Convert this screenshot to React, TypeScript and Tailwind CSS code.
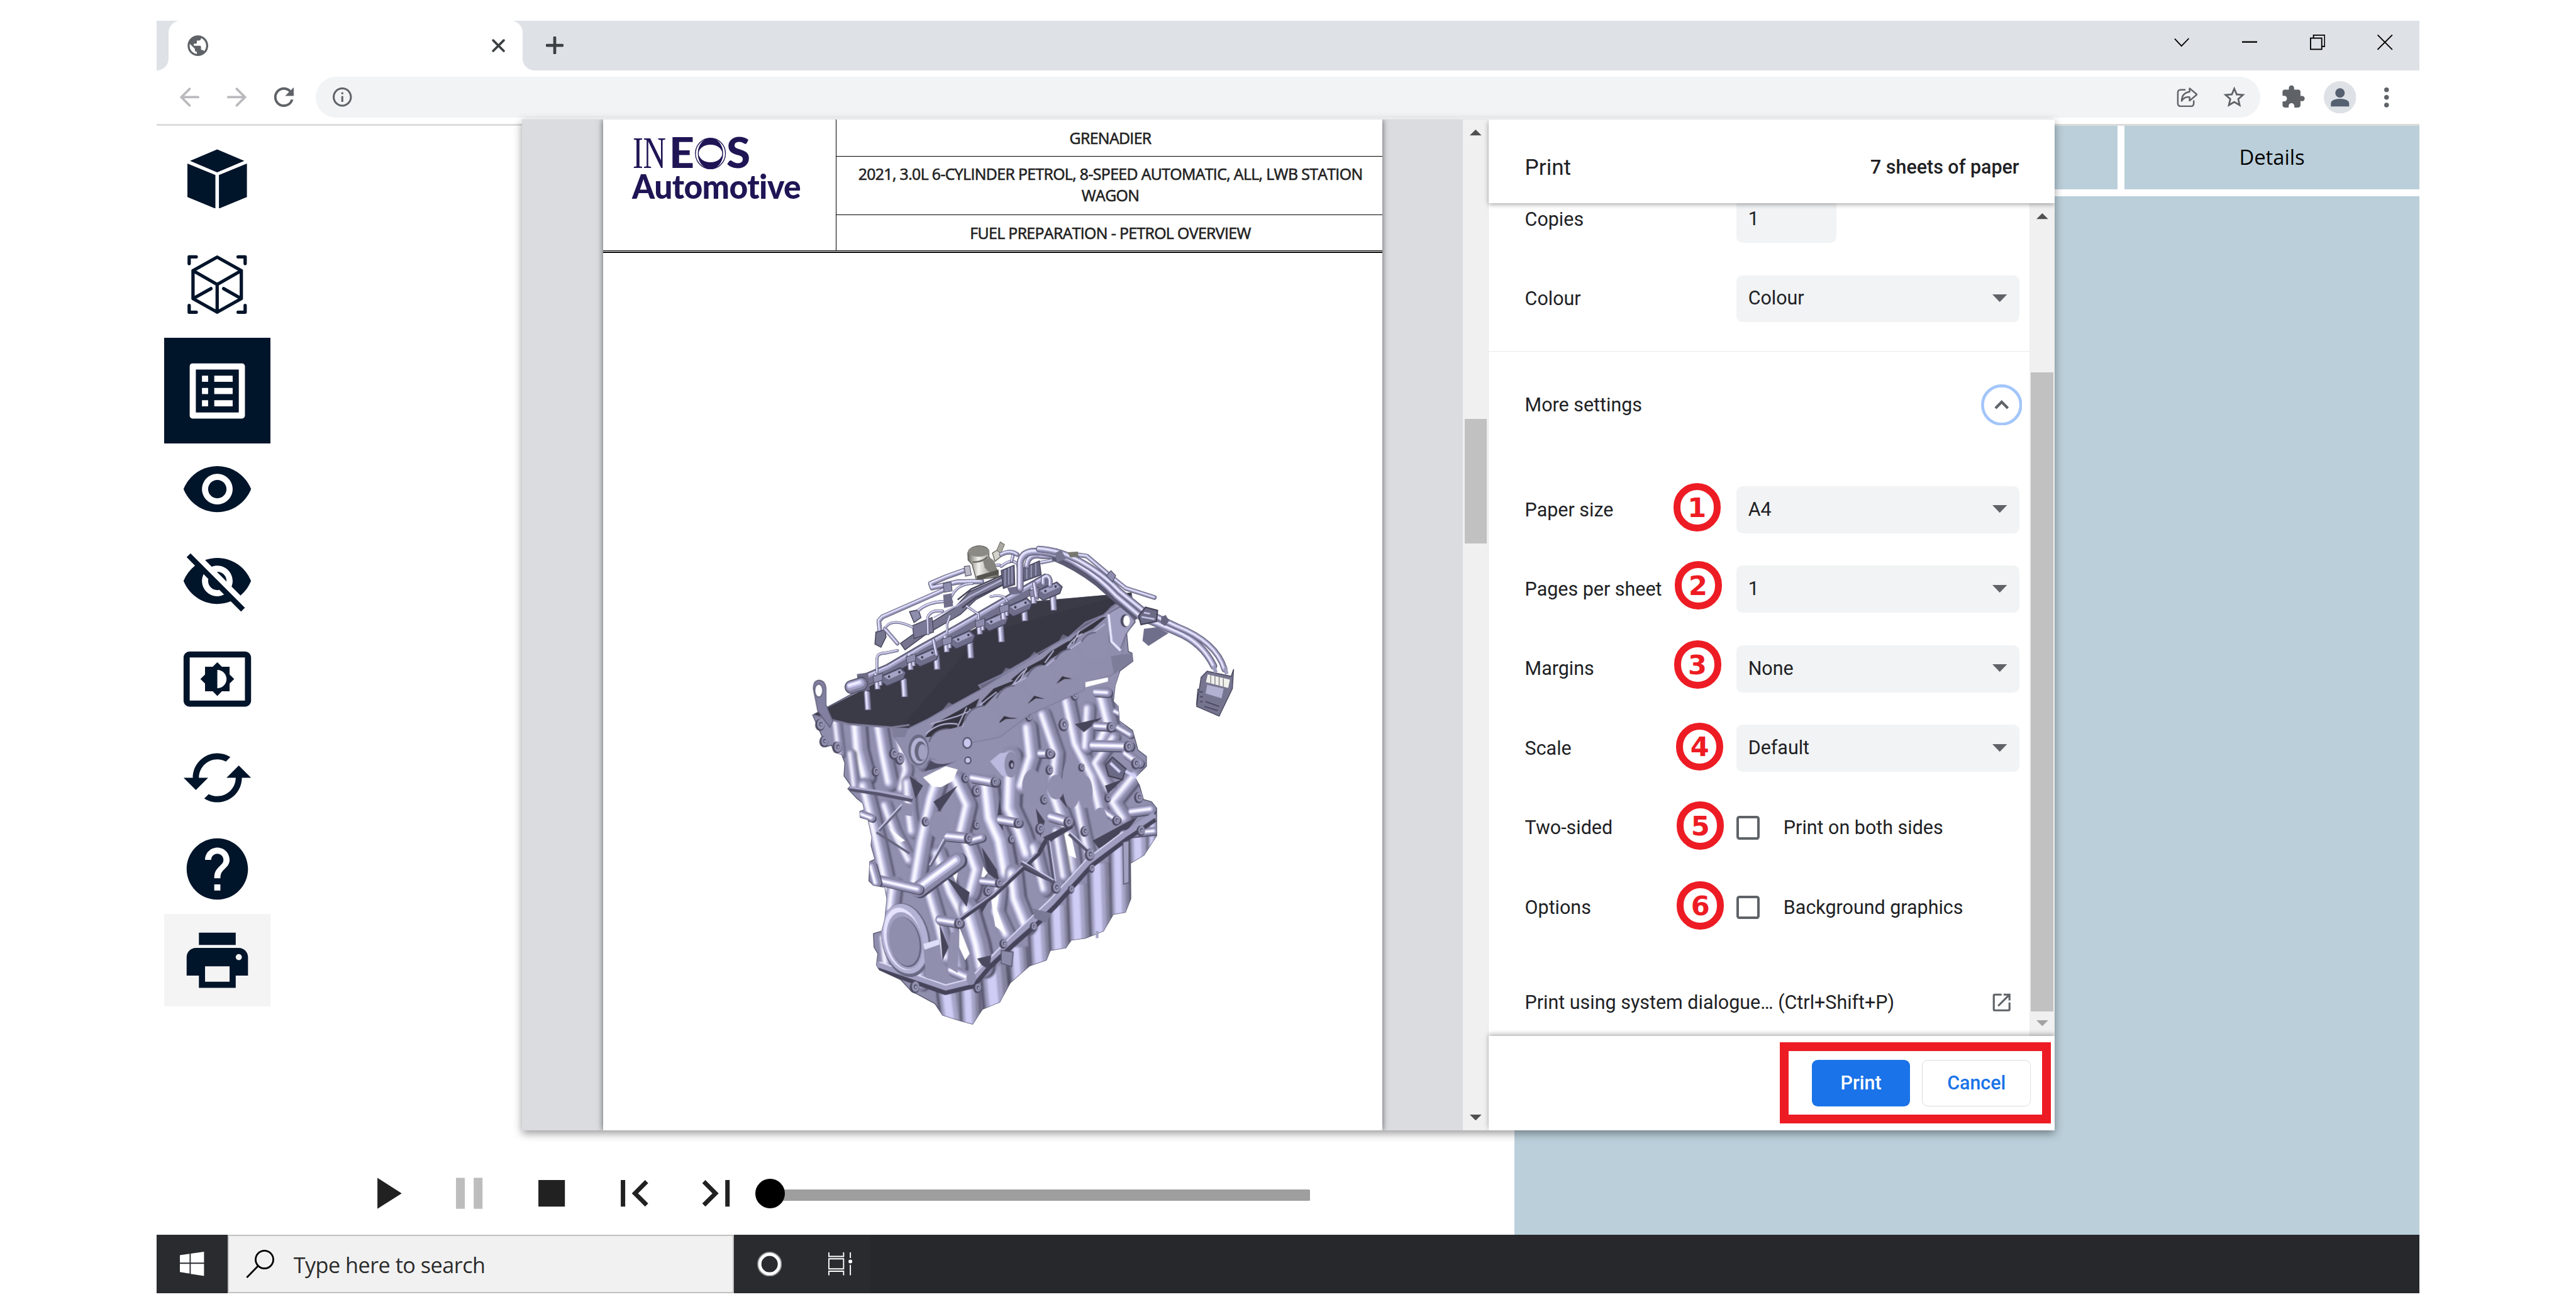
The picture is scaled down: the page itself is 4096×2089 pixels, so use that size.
import type { ReactNode } from "react";
import {
  MdCached,
  MdFirstPage,
  MdHelp,
  MdLastPage,
  MdOutlineListAlt,
  MdPause,
  MdPlayArrow,
  MdPrint,
  MdSettingsBrightness,
  MdStop,
  MdVisibility,
  MdVisibilityOff,
  MdExtension,
  MdOpenInNew,
  MdPublic,
  MdRefresh,
  MdStarOutline,
  MdInfoOutline,
} from "react-icons/md";

/* ---------- browser chrome ---------- */

function TabStrip() {
  return (
    <div className="flex h-[85px] bg-white">
      <div className="w-5 rounded-br-[20px] bg-[#dee1e6]" />
      <div className="w-[601px] bg-[linear-gradient(#dee1e6_50%,#fff_50%)]">
        <div className="flex h-full items-center justify-between rounded-t-[20px] bg-white pr-[26px] pl-[29px]">
          <MdPublic className="size-[42px] text-[#5f6368]" />
          <svg className="size-[29px]" viewBox="0 0 29 29">
            <path d="M5.500 5.500L23.500 23.500M23.500 5.500L5.500 23.500" stroke="#3c4043" strokeWidth="4" strokeLinecap="round" />
          </svg>
        </div>
      </div>
      <div className="flex flex-1 justify-between rounded-bl-[20px] bg-[#dee1e6] pr-[45px] pl-[39px]">
        <svg className="mt-[27px] size-[30px]" viewBox="0 0 30 30">
          <path d="M15 2V28M2 15H28" stroke="#3c4043" strokeWidth="5" strokeLinecap="round" />
        </svg>
        <div className="mt-[24px] flex gap-[89px]">
          <svg className="size-[26px]" viewBox="0 0 26 26" fill="none" stroke="#000" strokeWidth="2">
            <path d="M1 7L12.500 19.500L25 6.500" />
          </svg>
          <svg className="size-[26px]" viewBox="0 0 26 26">
            <path d="M0 12.500H26" stroke="#000" strokeWidth="2.500" />
          </svg>
          <svg className="size-[26px]" viewBox="0 0 26 26" fill="none" stroke="#000" strokeWidth="2">
            <rect x="1" y="6" width="19" height="19" />
            <path d="M6 6V1H25V20H20" />
          </svg>
          <svg className="size-[26px]" viewBox="0 0 26 26">
            <path d="M0.500 0.500L25.500 25.500M25.500 0.500L0.500 25.500" stroke="#000" strokeWidth="2" />
          </svg>
        </div>
      </div>
    </div>
  );
}

function Toolbar() {
  return (
    <div className="flex h-[90px] items-center bg-white">
      <svg className="ml-[39px] h-[33px] w-[33px]" viewBox="0 0 33 33" fill="none" stroke="#bababe" strokeWidth="4" strokeLinecap="round">
        <path d="M31 16.500H2.500M16.500 2.500L2.500 16.500L16.500 30.500" />
      </svg>
      <svg className="ml-[47px] h-[33px] w-[33px]" viewBox="0 0 33 33" fill="none" stroke="#bababe" strokeWidth="4" strokeLinecap="round">
        <path d="M2 16.500H30.500M16.500 2.500L30.500 16.500L16.500 30.500" />
      </svg>
      <MdRefresh className="ml-[39px] size-[50px] text-[#5f6368]" />
      <div className="ml-[29px] flex h-[70px] w-[3300px] items-center justify-between rounded-full bg-[#f1f3f4] pr-[22px] pl-[25px]">
        <MdInfoOutline className="size-[39px] text-[#5f6368]" />
        <div className="flex items-center gap-[40px]">
          <svg className="h-[34px] w-[36px]" viewBox="0 0 36 34" fill="none" stroke="#5f6368" strokeWidth="2.600" strokeLinejoin="round">
            <path d="M14 4H7Q2 4 2 9V27Q2 32 7 32H24Q29 32 29 27V23" strokeLinecap="round" />
            <path d="M22 1.500L34.500 12L22 22.500V16.500Q13 15 8.500 23Q9 9 22 7.500Z" />
          </svg>
          <MdStarOutline className="size-[44px] text-[#5f6368]" />
        </div>
      </div>
      <MdExtension className="ml-[34px] size-[43px] text-[#5f6368]" />
      <svg className="ml-[31px] size-[55px]" viewBox="0 0 55 55">
        <circle cx="27.500" cy="27.500" r="27.500" fill="#dee1e6" />
        <circle cx="27.500" cy="20" r="8" fill="#556070" />
        <path d="M12 43V37Q14 30 27.500 30Q41 30 43 37V43Z" fill="#556070" />
      </svg>
      <svg className="ml-[48px] h-[36px] w-2" viewBox="0 0 8 36" fill="#5f6368">
        <circle cx="4" cy="5" r="4" />
        <circle cx="4" cy="18" r="4" />
        <circle cx="4" cy="31" r="4" />
      </svg>
    </div>
  );
}

/* ---------- viewer side bar ---------- */

function CubeIcon() {
  return (
    <svg className="h-[101px] w-[101px]" viewBox="0 0 101 101" fill="#00142a">
      <path d="M50.500 0.500L96.500 20L50.500 39.500L4.500 20Z" />
      <path d="M0 24.500L47.500 44V101L0 81.500Z" />
      <path d="M101 24.500L53.500 44V101L101 81.500Z" />
    </svg>
  );
}

function CubeScanIcon() {
  return (
    <svg className="h-[101px] w-[101px]" viewBox="0 0 101 101" fill="none" stroke="#00142a" strokeWidth="5.600" strokeLinejoin="round" strokeLinecap="round">
      <path d="M50.500 4L91.500 27V74.500L50.500 97.500L9.500 74.500V27ZM9.500 27L50.500 50.500L91.500 27M50.500 50.500V97.500M9.500 74.500L40 57.500M91.500 74.500L61.500 57.500" />
      <path d="M15 3.500H3V15M86 3.500H98V15M3 86V97.500H15M98 86V97.500H86" />
    </svg>
  );
}

function SideItem({ className, children }: { className: string; children: ReactNode }) {
  return <div className={"flex w-[180px] items-center justify-center " + className}>{children}</div>;
}

function SideBar() {
  return (
    <div className="ml-[13px] flex w-[180px] flex-col text-[#00142a]">
      <SideItem className="h-[180px]"><CubeIcon /></SideItem>
      <SideItem className="h-[180px]"><CubeScanIcon /></SideItem>
      <SideItem className="h-[180px] bg-[#00142a] text-white"><MdOutlineListAlt className="size-[125px]" /></SideItem>
      <SideItem className="h-[155px]"><MdVisibility className="size-[125px]" /></SideItem>
      <SideItem className="h-[156px]"><MdVisibilityOff className="size-[125px]" /></SideItem>
      <SideItem className="h-[177px]"><MdSettingsBrightness className="size-[125px]" /></SideItem>
      <SideItem className="h-[157px]"><MdCached className="size-[125px]" /></SideItem>
      <SideItem className="h-[153px]"><MdHelp className="size-[125px]" /></SideItem>
      <SideItem className="h-[157px] bg-[#f4f4f4]"><MdPrint className="size-[125px]" /></SideItem>
    </div>
  );
}

/* ---------- engine illustration ---------- */

type TubeSpec = [string, number];

function Tube({ d, w, cap = "round" }: { d: string; w: number; cap?: "round" | "butt" }) {
  return (
    <g fill="none" strokeLinecap={cap} strokeLinejoin="round">
      <path d={d} stroke="#4b4a61" strokeWidth={w} />
      <path d={d} stroke="#7f7e9c" strokeWidth={w * 0.88} />
      <path d={d} stroke="#a3a2c4" strokeWidth={w * 0.62} transform={`translate(${-w * 0.06} ${-w * 0.06})`} />
      <path d={d} stroke="#cdcbf3" strokeWidth={w * 0.36} transform={`translate(${-w * 0.12} ${-w * 0.1})`} />
      <path d={d} stroke="#f4f3ff" strokeWidth={w * 0.13} transform={`translate(${-w * 0.16} ${-w * 0.12})`} />
    </g>
  );
}

/* A rib that belongs to the casting: shaded on its right flank, lit on its left. */
function Rib({ d, w, cap = "round" }: { d: string; w: number; cap?: "round" | "butt" }) {
  return (
    <g fill="none" strokeLinecap={cap} strokeLinejoin="round">
      <path d={d} stroke="#4f4e66" strokeWidth={w * 0.94} transform={`translate(${w * 0.12} 3)`} />
      <path d={d} stroke="#8a89a8" strokeWidth={w * 0.92} />
      <path d={d} stroke="#b1b0d3" strokeWidth={w * 0.55} transform={`translate(${-w * 0.1} 0)`} />
      <path d={d} stroke="#e2e0fd" strokeWidth={w * 0.3} transform={`translate(${-w * 0.14} 0)`} />
      <path d={d} stroke="#ffffff" strokeWidth={w * 0.12} transform={`translate(${-w * 0.16} 0)`} />
    </g>
  );
}

function PanLobe({ d, w }: { d: string; w: number }) {
  return (
    <g fill="none">
      <path d={d} stroke="#45445a" strokeWidth={w} />
      <path d={d} stroke="#85849f" strokeWidth={w * 0.86} />
      <path d={d} stroke="#a6a5c8" strokeWidth={w * 0.6} transform={`translate(${-w * 0.06} 0)`} />
      <path d={d} stroke="#cfcdf5" strokeWidth={w * 0.32} transform={`translate(${-w * 0.1} 0)`} />
    </g>
  );
}

function Boss({ x, y, r }: { x: number; y: number; r: number }) {
  return (
    <g>
      <ellipse cx={x - 3} cy={y + 2} rx={r + 2} ry={r * 1.2 + 2} fill="#4b4a61" />
      <ellipse cx={x} cy={y} rx={r * 0.9} ry={r * 1.15} fill="#9291b0" />
      <ellipse cx={x} cy={y} rx={r * 0.38} ry={r * 0.5} fill="#4b4a61" />
      <ellipse cx={x + 1} cy={y + 1} rx={r * 0.2} ry={r * 0.3} fill="#b9b8d8" />
    </g>
  );
}

const BLOCK =
  "M78 572L110 640L105 655L120 670L140 665L150 685L175 695L185 720L182 760L205 790L195 800L225 830L245 845L250 865L235 870L236 888L262 895L275 950L272 975L285 1018L268 1025L265 1085L280 1098L318 1105L325 1140L318 1205L308 1240L280 1248L282 1290L295 1310L290 1345L300 1360L370 1390L405 1425L485 1465L510 1500L560 1515L610 1528L642 1482L700 1460L735 1400L800 1347L855 1330L868 1300L920 1292L938 1268L985 1262L1045 1240L1078 1188L1118 1182L1136 1140L1135 1030L1180 1005L1222 945L1222 860L1205 840L1178 833L1165 790L1150 765L1188 730L1188 700L1160 680L1142 620L1098 590L1094 545L1078 530L1084 480L1100 435L1143 405L1140 380L1128 375L1122 315L1150 285L1138 195L800 222L380 420Z";

const WALL_RIBS: TubeSpec[] = [
  ["M225 600L232 680L255 760", 62],
  ["M300 605L315 690L335 780", 54],
  ["M155 590L168 690", 34],
  ["M205 690L218 790", 34],
  ["M370 650L390 740L375 800", 44],
  ["M250 790L275 880L300 980L330 1110", 54],
  ["M320 850L350 930L400 1020", 44],
  ["M395 780L400 860L410 930", 48],
  ["M450 620L440 720", 46],
  ["M500 760L475 830L445 960L420 1100", 60],
  ["M555 770L595 850L575 930", 56],
  ["M590 960L625 1050L605 1120", 58],
  ["M660 790L672 890L705 960L725 1060", 72],
  ["M740 700L735 860L770 930L795 1000", 68],
  ["M795 610L806 700L775 790", 58],
  ["M845 570L890 690L880 790", 50],
  ["M925 530L955 660L1010 760L1035 860", 52],
  ["M880 810L930 940L945 1050", 58],
  ["M960 840L980 930L1000 1010", 44],
  ["M745 1060L755 1140L790 1220", 62],
  ["M700 1110L690 1180L725 1250", 52],
  ["M815 980L850 1110", 48],
  ["M890 930L915 1070", 42],
  ["M495 1000L540 1120L585 1200", 56],
  ["M595 1170L630 1280L645 1350", 72],
  ["M535 1230L560 1350", 60],
  ["M465 1110L500 1220L525 1320", 52],
  ["M1040 510L1065 600L1030 670", 58],
  ["M995 550L988 670", 46],
  ["M1080 640L1020 720L1065 800", 42],
  ["M1150 760L1080 840L1115 890", 50],
  ["M350 1095L340 1170", 52],
  ["M315 1260L325 1340", 44],
  ["M430 1330L440 1400", 50],
];

const CROSS_TUBES: TubeSpec[] = [
  ["M1010 665L1130 668", 36],
  ["M1020 605L1075 608", 28],
  ["M1095 610L1135 632", 24],
  ["M1020 500L1060 502", 30],
  ["M610 765L685 778", 34],
  ["M525 945L600 952", 34],
  ["M870 885L930 902", 34],
  ["M700 895L762 905", 30],
  ["M430 1110L560 1020", 54],
  ["M290 1080L430 1110", 34],
  ["M600 960L640 950", 28],
  ["M640 1085L690 1090", 26],
  ["M500 1205L565 1215", 32],
  ["M540 1360L600 1385", 38],
  ["M240 878L275 890", 26],
  ["M275 1040L290 1090", 34],
  ["M1050 870L1090 895", 26],
  ["M1140 870L1205 862", 34],
  ["M1110 940L1215 930", 26],
  ["M835 690L868 690", 30],
  ["M1120 690L1165 720", 32],
  ["M1130 580L1085 560", 24],
];

const BOSSES: [number, number, number][] = [
  [915, 600, 15], [1072, 608, 12], [1130, 668, 13], [685, 778, 11], [598, 952, 12],
  [930, 902, 13], [762, 905, 11], [836, 922, 13], [625, 910, 11], [1002, 1002, 14], [890, 1104, 14],
  [700, 1090, 11], [662, 1115, 12], [565, 1215, 12], [742, 955, 10], [456, 900, 11], [868, 690, 12],
  [625, 805, 14], [588, 765, 11], [868, 740, 11], [1155, 720, 13], [1165, 825, 13], [850, 832, 11],
  [370, 705, 14], [350, 690, 13], [118, 652, 13], [162, 670, 14], [105, 600, 14], [290, 745, 11],
  [1172, 928, 12], [1090, 897, 11], [985, 930, 12], [800, 575, 11], [952, 510, 11],
  [715, 1278, 11], [628, 1415, 11], [420, 1412, 14], [815, 1225, 10], [1008, 1045, 9], [940, 1110, 9],
  [1062, 828, 9], [975, 732, 9],
];

const PAN_LOBES: TubeSpec[] = [
  ["M530 1420L545 1530", 84],
  ["M600 1420L605 1540", 70],
  ["M680 1350L692 1480", 96],
  ["M760 1290L768 1410", 66],
  ["M830 1220L838 1350", 74],
  ["M895 1160L902 1310", 72],
  ["M960 1095L968 1275", 78],
  ["M1030 1030L1038 1255", 78],
  ["M1098 970L1103 1200", 70],
  ["M1165 930L1168 1030", 76],
  ["M1210 900L1208 990", 34],
];

const STUDS: [number, number][] = [[258, 500], [380, 460], [488, 375], [600, 340], [702, 290], [780, 225], [876, 192]];

const INJECTORS: [number, number][] = [[330, 450], [440, 390], [560, 335], [670, 280], [750, 235], [850, 185]];

function Engine() {
  return (
    <svg className="h-[860px] w-[800px]" viewBox="0 0 1568 1568" preserveAspectRatio="none">
      <defs>
        <clipPath id="block"><path d={BLOCK} /></clipPath>
        <filter id="soft" x="-5%" y="-5%" width="110%" height="110%"><feGaussianBlur stdDeviation="3" /></filter>
        <linearGradient id="metal" x1="0" x2="1">
          <stop offset="0" stopColor="#6d6c66" />
          <stop offset="0.350" stopColor="#f3f2ec" />
          <stop offset="1" stopColor="#6b6a64" />
        </linearGradient>
      </defs>

      <path d={BLOCK} fill="#8f8ead" stroke="#5d5c75" strokeWidth="3" />
      <g clipPath="url(#block)">
        <g filter="url(#soft)">{PAN_LOBES.map(([d, w]) => <PanLobe key={d} d={d} w={w} />)}</g>
        <path d="M180 600L1100 440L1140 800L1210 870L1130 940L1000 1040L880 1160L740 1270L640 1370L520 1430L290 1350L330 1110Z" fill="#9190af" />
        <g filter="url(#soft)">
          {WALL_RIBS.map(([d, w]) => <Rib key={d} d={d} w={w} />)}
        </g>
        <g fill="#46455a">
          <path d="M640 980L660 1060L700 1090L690 1050Z" />
          <path d="M845 950L920 915L860 975Z" />
          <path d="M1010 960L1160 885L1120 935L1030 985Z" />
          <path d="M950 600L1040 580L980 625Z" />
          <path d="M520 1070L590 1165L600 1120Z" />
          <path d="M790 1020L860 1085L780 1050Z" />
          <path d="M400 760L445 790L420 830Z" />
          <path d="M630 1150L680 1120L640 1185Z" />
          <path d="M1050 790L1110 770L1060 815Z" />
          <path d="M480 840L560 790L500 870Z" />
          <path d="M820 860L850 900L835 950Z" />
          <path d="M700 830L712 930L690 900Z" />
          <path d="M905 790L925 860L900 830Z" />
          <path d="M500 1220L530 1290L510 1330Z" />
        </g>
        <g fill="#fff">
          <path d="M445 765L520 730L560 740L545 775L505 795L475 792Z" />
          <path d="M645 1040L660 1060L635 1090Z" />
          <path d="M565 1225L600 1310L585 1330L565 1290Z" />
          <path d="M670 1135L700 1110L690 1170L720 1250L685 1225Z" />
          <path d="M915 940L935 935L955 1015L930 1005Z" />
          <path d="M330 920L385 960L370 966Z" />
          <path d="M540 1020L560 1060L555 1090L535 1050Z" />
        </g>
        {CROSS_TUBES.map(([d, w]) => <Rib key={d} d={d} w={w} />)}

        <g fill="none" strokeLinejoin="round">
          <path d="M560 1210L680 1130L830 1000L850 965L940 915" stroke="#45445a" strokeWidth="14" />
          <path d="M560 1203L680 1123L826 994" stroke="#a9a8ca" strokeWidth="6" />
          <path d="M290 1350L520 1425L610 1405L660 1350L740 1280L820 1215L880 1160L1000 1035L1120 950L1215 890" stroke="#45445a" strokeWidth="26" />
          <path d="M290 1342L520 1415L605 1396L655 1340L735 1270L815 1205L875 1150L995 1026L1115 942L1215 880" stroke="#9f9ec0" strokeWidth="18" />
          <path d="M300 1336L520 1407L600 1388L735 1259L870 1140L990 1017L1110 933" stroke="#dddcf8" strokeWidth="4" />
          <path d="M200 800L300 815L410 835" stroke="#55546c" strokeWidth="13" />
          <path d="M200 795L300 808L410 828" stroke="#a9a8ca" strokeWidth="7" />
          <path d="M300 930L380 850M290 935L400 1000M470 1040L520 960" stroke="#66657e" strokeWidth="7" />
          <path d="M296 926L376 846M466 1036L514 955" stroke="#d5d4f4" strokeWidth="4" />
          <path d="M770 1030L880 1090M860 960L880 1090M1000 1000L930 940" stroke="#57566e" strokeWidth="9" />
          <path d="M774 1024L880 1082M866 960L886 1086M1004 994L936 936" stroke="#d0cff0" strokeWidth="4" />
        </g>

        {/* flat sealing pads */}
        <g fill="#908fae">
          <ellipse cx="497" cy="912" rx="32" ry="42" />
          <ellipse cx="808" cy="792" rx="33" ry="52" />
          <ellipse cx="887" cy="795" rx="28" ry="38" />
          <ellipse cx="940" cy="780" rx="32" ry="80" />
          <ellipse cx="985" cy="810" rx="24" ry="50" />
          <ellipse cx="1034" cy="900" rx="24" ry="42" />
          <ellipse cx="605" cy="1385" rx="16" ry="22" />
          <path d="M375 840L412 850L410 885L370 880Z" />
          <path d="M535 1245L565 1240L560 1370L525 1350Z" />
        </g>
        {/* crank seal cover */}
        <ellipse cx="388" cy="1268" rx="80" ry="116" fill="#6a6983" transform="rotate(-14 388 1268)" />
        <ellipse cx="385" cy="1264" rx="76" ry="110" fill="#b3b2d4" transform="rotate(-14 385 1264)" />
        <ellipse cx="378" cy="1264" rx="62" ry="98" fill="#e4e2fd" transform="rotate(-14 378 1264)" />
        <ellipse cx="384" cy="1270" rx="58" ry="90" fill="#a2a1c2" transform="rotate(-14 384 1270)" />
        <ellipse cx="386" cy="1274" rx="51" ry="79" fill="#62617b" transform="rotate(-14 386 1274)" />
        <ellipse cx="383" cy="1272" rx="49" ry="77" fill="#8f8ead" transform="rotate(-14 383 1272)" />
        <path d="M445 1280L500 1265L510 1400L455 1385Z" fill="#908fae" />
        <path d="M445 1280L500 1265L500 1282L450 1298Z" fill="#e0dffa" />
      </g>
      <path d="M1052 725L1075 702L1120 738L1108 772L1062 760Z" fill="#6b6a86" stroke="#3f3e52" strokeWidth="4" />
      <path d="M1068 720L1100 748M1118 745L1155 765" stroke="#d5d3f8" strokeWidth="9" />
      <path d="M810 1170L872 1185L855 1215L815 1200Z" fill="#7a7996" />
      <path d="M705 1300L745 1305L740 1350L705 1340Z" fill="#8b8aa9" stroke="#56556c" strokeWidth="3" />
      <path d="M625 1325L672 1315L665 1360L640 1345Z" fill="#4b4a60" />
      <path d="M1110 965L1130 960L1130 1090L1112 1095Z" fill="#a3a2c3" stroke="#56556c" strokeWidth="3" />
      <path d="M1024 1240V1262" stroke="#a3a2c3" strokeWidth="9" />
      {BOSSES.map(([x, y, r]) => <Boss key={`${x}-${y}`} x={x} y={y} r={r} />)}
      <path d="M700 690L745 685V765L708 760L668 715Z" fill="#bbb9dd" />
      <ellipse cx="738" cy="725" rx="22" ry="40" fill="#8f8ead" />
      <ellipse cx="739" cy="725" rx="9" ry="14" fill="#3f3e52" />
      <ellipse cx="741" cy="727" rx="4" ry="7" fill="#a7a6c8" />

      {/* cylinder head side face */}
      <path d="M400 612L640 490L820 390L910 330L1085 228L1130 215L1150 285L1120 320L1098 430L1070 450L985 470L980 495L800 570L700 640L620 655L585 660L570 705L520 722L470 705L440 740L400 720L350 640Z" fill="#8f8ead" stroke="#7a7996" strokeWidth="2" />
      <path d="M1065 255L1110 232L1150 282L1120 322L1100 370L1065 345Z" fill="#9f9ec0" stroke="#6a6983" strokeWidth="3" />
      <path d="M1062 260L1072 345L1102 372" stroke="#e6e5ff" strokeWidth="8" fill="none" />
      <ellipse cx="1117" cy="280" rx="15" ry="20" fill="#4b4a61" />
      <ellipse cx="1122" cy="280" rx="11" ry="17" fill="#fff" />
      <path d="M985 470L1060 455L1060 468L985 486Z" fill="#fff" />
      <path d="M1070 390L1140 380L1143 405L1080 445Z" fill="#7d7c99" />
      <g fill="#34333f">
        <path d="M452 640L485 598L560 560L632 520L610 570L575 605L520 618L480 638Z" />
        <path d="M640 528L680 490L755 462L740 482L690 505L645 548Z" />
        <path d="M738 462L780 430L850 395L835 418L790 440L755 470Z" />
        <path d="M830 410L870 375L925 345L940 340L920 370L870 398L845 422Z" />
        <path d="M925 350L960 318L1040 270L1055 268L1010 305L965 325L950 350Z" />
        <path d="M888 475L910 450L940 460L915 460Z" />
        <path d="M792 538L815 512L850 522L820 520Z" />
        <path d="M692 600L715 575L760 582L720 584Z" />
      </g>
      <g fill="none" stroke="#b5b4d6" strokeWidth="4">
        <path d="M455 630Q500 590 560 600M630 545Q660 520 690 500M560 608L590 548M575 608L602 552" />
        <path d="M735 490Q770 440 790 430M765 470L790 425M850 410L880 372M925 362Q950 330 975 320M945 350L965 310" />
        <path d="M470 600L560 575L640 545M700 500L790 455M830 440L880 400M930 370L985 335L1050 290" />
      </g>
      <g fill="#908fae">
        <ellipse cx="525" cy="668" rx="62" ry="54" />
        <ellipse cx="640" cy="596" rx="60" ry="52" />
        <ellipse cx="742" cy="530" rx="52" ry="50" />
        <ellipse cx="838" cy="465" rx="50" ry="48" />
        <ellipse cx="930" cy="412" rx="47" ry="44" />
        <ellipse cx="1015" cy="358" rx="46" ry="42" />
      </g>
      <g fill="none" stroke="#62617b" strokeWidth="4">
        <path d="M465 655Q480 615 530 614M583 590Q600 545 650 543M690 520Q710 480 750 481M790 455Q810 418 840 417M885 400Q905 368 935 368M972 345Q990 316 1020 316" />
      </g>
      <ellipse cx="430" cy="680" rx="34" ry="48" fill="#6a6983" />
      <ellipse cx="432" cy="682" rx="28" ry="40" fill="#b4b3d5" />
      <ellipse cx="437" cy="684" rx="20" ry="31" fill="#67667f" />
      <ellipse cx="443" cy="686" rx="14" ry="24" fill="#a2a1c2" />
      <path d="M470 712Q500 735 560 712L520 728L475 740L450 745Z" fill="#4b4a61" />
      <ellipse cx="592" cy="658" rx="14" ry="16" fill="#c9c7ee" stroke="#4b4a61" strokeWidth="4" />
      <ellipse cx="594" cy="712" rx="10" ry="10" fill="#c9c7ee" stroke="#4b4a61" strokeWidth="4" />
      <path d="M340 612L400 600L385 640L345 640Z" fill="#7f7e9b" />

      {/* deck */}
      <path d="M78 572L240 496L380 425L560 330L800 222L1138 193L1136 205L1070 235L1045 262L985 285L930 330L910 322L895 345L830 385L815 375L795 398L740 430L720 425L705 447L630 480L640 492L545 540L530 532L510 555L460 585L400 612L340 610L200 602Z" fill="#3b3a47" />
      <path d="M380 602L640 320L1138 193L1045 262L930 330L795 398L640 490L400 612Z" fill="#33323e" opacity="0.400" />
      <path d="M78 572L200 600L340 610L400 602" stroke="#7d7c99" strokeWidth="6" fill="none" />
      <path d="M400 612L460 585L545 540L640 492L630 480L705 447L795 398L895 345L930 330L985 285L1045 262L1085 228" stroke="#8180a0" strokeWidth="4" fill="none" />

      {/* lifting eye */}
      <path d="M80 490Q80 464 100 464Q120 466 122 490V540L145 590L135 610L95 560Z" fill="#8180a0" stroke="#5d5c75" strokeWidth="3" />
      <ellipse cx="98" cy="496" rx="13" ry="20" fill="#fff" stroke="#5d5c75" strokeWidth="3" />

      {/* studs, fuel rail and injector clamps */}
      {STUDS.map(([x, y]) => <Tube key={x} d={`M${x} ${y}L${x + 4} ${y + 56}`} w={22} cap="butt" />)}
      <g fill="none">
        <path d="M235 470L330 432L440 372L560 310L700 235L860 150" stroke="#4b4a61" strokeWidth="38" />
        <path d="M235 470L330 432L440 372L560 310L700 235L860 150" stroke="#73728e" strokeWidth="34" />
        <path d="M233 462L328 424L438 364L558 302L698 227L858 142" stroke="#a4a3c6" strokeWidth="12" />
        <path d="M233 459L328 421L438 361L558 299L698 224L858 139" stroke="#d3d1f6" strokeWidth="4" />
      </g>
      <path d="M225 445L262 440L268 495L230 500Z" fill="#6c6b86" />
      <Tube d="M205 485L240 475" w={42} />
      {INJECTORS.map(([x, y]) => (
        <g key={x}>
          <path d={`M${x - 20} ${y}L${x + 40} ${y - 25}L${x + 58} ${y - 10}L${x + 50} ${y + 10}L${x - 5} ${y + 32}L${x - 22} ${y + 20}Z`} fill="#6f6e8b" stroke="#43425a" strokeWidth="3" />
          <path d={`M${x - 16} ${y + 2}L${x + 38} ${y - 20}L${x + 50} ${y - 9}L${x} ${y + 12}Z`} fill="#a5a4c6" />
          <circle cx={x + 2} cy={y + 3} r="4" fill="#3f3e52" />
          <circle cx={x + 36} cy={y - 11} r="4" fill="#3f3e52" />
          <Tube d={`M${x - 40} ${y - 5}L${x - 36} ${y + 42}`} w={20} cap="butt" />
          <Tube d={`M${x - 28} ${y + 2}L${x - 26} ${y + 30}`} w={13} cap="butt" />
          <path d={`M${x - 52} ${y + 2}L${x - 20} ${y - 8}V${y + 14}L${x - 48} ${y + 22}Z`} fill="#8e8dad" stroke="#4b4a61" strokeWidth="2" />
        </g>
      ))}

      {/* cable duct and thin lines */}
      <path d="M370 350L430 310L550 240L600 190L720 140L730 160L620 215L570 260L450 325L385 370Z" fill="#76758f" stroke="#43425a" strokeWidth="3" />
      <path d="M480 270L560 232L600 205L715 150" stroke="#b5b4d6" strokeWidth="5" fill="none" />
      <path d="M560 215L605 182L712 138M575 240L620 208L720 165" stroke="#454459" strokeWidth="5" fill="none" />
      <path d="M410 295L475 270L480 315L415 335Z" fill="#7a7997" stroke="#4b4a61" strokeWidth="3" />
      <path d="M705 125L748 108L750 168L712 180ZM775 118L832 95L838 138L780 158Z" fill="#66657f" stroke="#43425a" strokeWidth="3" />
      <path d="M718 122V172M730 116V168M741 112V165M790 115V150M805 108V146M820 102V140" stroke="#9a99b9" strokeWidth="4" />
      <path d="M725 178L770 172L775 195L735 200Z" fill="#6f6e8b" />
      <Tube d="M580 125L520 145L470 165L475 178L560 160L640 158" w={16} />
      <Tube d="M530 178L440 215L310 268L298 280L302 318" w={15} />
      <path d="M512 165L538 160L542 188L515 192Z" fill="#8e8dad" stroke="#4b4a61" strokeWidth="2" />
      <path d="M582 112L600 110L606 138L586 142Z" fill="#b9b8c4" stroke="#4b4a61" strokeWidth="2" />
      <path d="M288 315L318 308L322 330L305 362L285 352Z" fill="#76758f" stroke="#43425a" strokeWidth="3" />
      <path d="M400 252L430 246L438 270L415 285Z" fill="#8e8dad" stroke="#43425a" strokeWidth="3" />
      <Tube d="M318 305L360 350" w={13} />
      <g>
        <Tube d="M320 300Q345 270 410 300" w={8} />
        <Tube d="M292 440V400Q290 380 320 380L360 372" w={9} />
        <Tube d="M430 248Q470 215 540 222" w={10} />
        <Tube d="M462 320L460 270Q470 245 510 250" w={9} />
        <Tube d="M540 205Q560 165 610 165" w={8} />
        <Tube d="M636 150Q660 105 700 108" w={9} />
        <Tube d="M590 235L630 260V275" w={8} />
        <Tube d="M525 320V290L535 265" w={8} />
        <Tube d="M670 205Q715 195 725 220" w={8} />
        <Tube d="M480 340L490 385" w={12} />
        <Tube d="M705 112Q740 85 760 105L768 170" w={9} />
        <Tube d="M815 165L822 205" w={14} />
        <Tube d="M838 100L890 90" w={11} />
        <Tube d="M740 95L745 75" w={11} />
      </g>
      <path d="M512 200L540 195L545 235L515 240Z" fill="#6f6e8b" />
      <Tube d="M845 165V148Q862 135 868 155V170" w={16} />

      {/* high pressure pump */}
      <path d="M594 70Q600 50 632 48Q662 50 664 66V82L695 128V145L622 152L608 105L595 92Z" fill="url(#metal)" stroke="#5d5c58" strokeWidth="3" />
      <ellipse cx="630" cy="66" rx="36" ry="16" fill="#8b8a84" />
      <path d="M610 98Q640 100 660 82" stroke="#6b6a64" strokeWidth="5" fill="none" />
      <path d="M645 95Q680 70 690 120Q670 140 650 115Z" fill="#84837e" />
      <path d="M622 142L696 122V136L626 154Z" fill="#55544f" />
      <path d="M676 70L698 58L706 80L684 96Z" fill="#d5d4cc" stroke="#6b6a64" strokeWidth="3" />
      <path d="M690 62L702 36L716 44L704 72Z" fill="#a9a8a0" stroke="#6b6a64" strokeWidth="2" />

      {/* wiring harness */}
      <Tube d="M705 75Q735 60 758 75" w={14} />
      <Tube d="M790 110Q795 70 840 80L900 80" w={18} />
      <path d="M880 74Q960 104 1030 155Q1090 205 1165 262" stroke="#5b5a73" strokeWidth="40" fill="none" />
      <Tube d="M768 180V100Q775 65 820 66Q900 68 960 106Q1035 148 1090 205L1170 268L1290 315Q1375 348 1412 420" w={23} />
      <Tube d="M830 58Q900 62 965 95Q1045 135 1100 190L1180 250L1290 298Q1420 345 1448 430" w={20} />
      <Tube d="M960 76L990 80L1060 135L1120 180L1215 208" w={14} />
      <path d="M925 68L960 66L962 82L935 84Z" fill="#77766f" />
      <path d="M885 70L905 60L920 88L890 100Z" fill="#76758f" />
      <path d="M1055 140L1070 125L1086 140L1075 160Z" fill="#8e8dad" stroke="#4b4a61" strokeWidth="2" />
      <path d="M1162 265L1185 238L1225 248L1222 282L1170 292Z" fill="#6c6b86" stroke="#3f3e52" strokeWidth="4" />
      <path d="M1172 268L1215 275M1180 255L1200 258" stroke="#c5c4e6" strokeWidth="5" />
      <path d="M1180 305L1222 300L1262 318L1195 358L1175 342Z" fill="#706f8b" />
      <path d="M1238 268L1252 262L1264 280L1250 296L1236 288Z" fill="#65647e" />
      <path d="M1370 455L1390 436L1470 452L1478 430L1474 490L1430 575L1355 545Z" fill="#76758f" stroke="#4b4a61" strokeWidth="3" />
      <path d="M1392 446L1466 462L1460 488L1386 470Z" fill="#f1f1ec" />
      <path d="M1402 448V474M1416 450V478M1430 454V482M1444 458V486" stroke="#86858f" strokeWidth="3" />
      <path d="M1390 478L1445 490L1438 520L1385 505Z" fill="#b2b1d2" />
      <path d="M1360 490L1355 540M1366 500H1376M1366 515H1376M1366 530H1376M1385 530L1430 545M1380 545L1425 558" stroke="#4b4a61" strokeWidth="4" />
      <path d="M1410 420L1420 440M1450 425L1455 445" stroke="#9f9ec0" strokeWidth="12" />
    </svg>
  );
}

/* ---------- print preview ---------- */

function Logo() {
  return (
    <svg className="mt-[25px] ml-[50px] h-[120px] w-[290px] overflow-visible" viewBox="0 0 290 120" fill="#1f1555">
      <text x="0" y="57" fontFamily="Liberation Serif, serif" fontSize="76" textLength="56" lengthAdjust="spacingAndGlyphs">IN</text>
      <text x="62" y="57" fontFamily="Lato, sans-serif" fontWeight="900" fontSize="72" textLength="42" lengthAdjust="spacingAndGlyphs">E</text>
      <ellipse cx="132" cy="32" rx="25.500" ry="26" fill="none" stroke="#1f1555" strokeWidth="1.500" />
      <path fillRule="evenodd" d="M132 5.500A21.500 26.500 0 0 1 132 58.500A21.500 26.500 0 0 1 132 5.500ZM132 17A20 15 0 0 0 132 47A20 15 0 0 0 132 17Z" />
      <text x="159" y="57" fontFamily="Lato, sans-serif" fontWeight="900" fontSize="72" textLength="40" lengthAdjust="spacingAndGlyphs">S</text>
      <text x="-1" y="109" fontFamily="Lato, sans-serif" fontWeight="900" fontSize="57" textLength="286" lengthAdjust="spacingAndGlyphs">Automotive</text>
    </svg>
  );
}

function PreviewPage() {
  return (
    <div className="flex w-[1322px] flex-col bg-white shadow-[0_0_10px_rgba(0,0,0,0.6)]">
      <div className="flex h-[223px] border-b-2 border-black font-['Open_Sans',sans-serif] text-[26.500px] leading-[36px] tracking-[-0.650px] text-[#222] [-webkit-text-stroke:0.7px_#222]">
        <div className="w-[395px]"><Logo /></div>
        <div className="flex flex-1 flex-col border-l-2 border-black text-center whitespace-nowrap">
          <div className="h-[63px] border-b-2 border-black pt-[14px] pl-[3px]">GRENADIER</div>
          <div className="h-[99px] border-b-2 border-black pt-[12px] pl-[3px]">
            2021, 3.0L 6-CYLINDER PETROL, 8-SPEED AUTOMATIC, ALL, LWB STATION
            <br />
            WAGON
          </div>
          <div className="pt-[13px] pl-[3px]">FUEL PREPARATION - PETROL OVERVIEW</div>
        </div>
      </div>
      <div className="mt-px h-[2px] bg-black" />
      <div className="mt-[471px] ml-[316px]"><Engine /></div>
    </div>
  );
}

function Arrow({ up, className }: { up?: boolean; className: string }) {
  return (
    <svg className={className} viewBox="0 0 20 10" preserveAspectRatio="none" fill="currentColor">
      <path d={up ? "M0 10L10 0L20 10Z" : "M0 0H20L10 10Z"} />
    </svg>
  );
}

function PreviewScrollbar() {
  return (
    <div className="flex w-[44px] flex-col items-center border-r-2 border-[#e8e8ee] bg-[#f0f0f0] text-[#505050]">
      <Arrow up className="mt-[17px] h-[10px] w-5" />
      <div className="mt-[481px] h-[211px] w-[38px] bg-[#c1c1c1]" />
      <Arrow className="mt-[969px] h-[10px] w-5" />
    </div>
  );
}

function Select({ value }: { value: string }) {
  return (
    <div className="flex h-20 w-[480px] items-center justify-between rounded-[10px] bg-[#f1f3f4] pr-5 pb-[2px] pl-5">
      {value}
      <Arrow className="h-[13px] w-[25px] text-[#5f6368]" />
    </div>
  );
}

function Checkbox({ label }: { label: string }) {
  return (
    <div className="flex items-center gap-10">
      <div className="size-10 rounded-[5px] border-5 border-[#5f6368]" />
      {label}
    </div>
  );
}

function Marker({ n, className }: { n: number; className: string }) {
  return (
    <div className={"absolute flex h-[82px] w-20 items-center justify-center rounded-full border-12 border-[#ed1c24] bg-white pt-[2px] font-['DejaVu_Sans',sans-serif] text-[46px] leading-none font-bold text-[#ed1c24] " + className}>
      {n}
    </div>
  );
}

function Row({ label, marker, children }: { label: string; marker?: ReactNode; children: ReactNode }) {
  return (
    <div className="relative mb-[55px] flex h-20 items-center pl-[61px]">
      <div className="w-[359px]">{label}</div>
      {marker}
      {children}
    </div>
  );
}

function Settings() {
  return (
    <div className="flex h-[1413px] bg-white">
      <div className="flex w-[918px] flex-col">
        <div className="flex h-[67px] items-start pl-[61px]">
          <div className="w-[359px] pt-[3px]">Copies</div>
          <div className="flex h-[67px] w-[170px] items-start rounded-b-[10px] bg-[#f1f3f4] pt-[2px] pl-5">1</div>
        </div>
        <div className="mt-[55px] h-[130px] border-b-2 border-[#e8eaed]">
          <Row label="Colour"><Select value="Colour" /></Row>
        </div>
        <div className="mt-[55px] mb-[103px] flex h-[70px] items-center justify-between pr-[13px] pl-[61px]">
          More settings
          <svg className="size-[70px]" viewBox="0 0 70 70" fill="none">
            <circle cx="35" cy="35" r="32.500" stroke="#a3c6fa" strokeWidth="5" />
            <path d="M24.500 40.500L35 30L45.500 40.500" stroke="#5f6368" strokeWidth="4.500" />
          </svg>
        </div>
        <Row label="Paper size" marker={<Marker n={1} className="top-[-5px] left-[313px]" />}><Select value="A4" /></Row>
        <Row label="Pages per sheet" marker={<Marker n={2} className="top-[-8px] left-[315px]" />}><Select value="1" /></Row>
        <Row label="Margins" marker={<Marker n={3} className="top-[-8px] left-[314px]" />}><Select value="None" /></Row>
        <Row label="Scale" marker={<Marker n={4} className="top-[-4px] left-[318px]" />}><Select value="Default" /></Row>
        <Row label="Two-sided" marker={<Marker n={5} className="top-[-5px] left-[319px]" />}><Checkbox label="Print on both sides" /></Row>
        <Row label="Options" marker={<Marker n={6} className="top-[-4px] left-[319px]" />}><Checkbox label="Background graphics" /></Row>
        <div className="mt-[26px] flex h-20 items-center justify-between pr-[28px] pl-[61px]">
          Print using system dialogue… (Ctrl+Shift+P)
          <MdOpenInNew className="size-[40px] text-[#5f6368]" />
        </div>
      </div>
      <div className="flex w-[42px] flex-col items-center bg-[#f0f0f0]">
        <Arrow up className="mt-[17px] h-[10px] w-5 text-[#505050]" />
        <div className="mt-[260px] h-[1084px] w-[38px] bg-[#c1c1c1]" />
        <Arrow className="mt-[15px] h-[10px] w-5 text-[#a3a3a3]" />
      </div>
    </div>
  );
}

function PrintDialog() {
  return (
    <div className="absolute top-[167px] left-[620px] flex h-[1716px] w-[2601px] overflow-hidden border-t border-[#e3e5e6] bg-[#dadce0]">
      <div className="flex w-[1597px] justify-center pl-[1px]"><PreviewPage /></div>
      <PreviewScrollbar />
      <div className="flex w-[960px] flex-col bg-white font-['Roboto',sans-serif] text-[32.500px] text-[#202124]">
        <div className="z-10 flex h-[142px] items-center justify-between bg-white pt-5 pr-[60px] pl-[61px] shadow-[0_3px_8px_rgba(0,0,0,0.35)]">
          <span className="text-[37.500px]">Print</span>
          <span className="font-medium">7 sheets of paper</span>
        </div>
        <Settings />
        <div className="relative z-10 flex flex-1 items-center justify-end gap-5 bg-white pr-10 font-medium shadow-[0_-3px_8px_rgba(0,0,0,0.3)]">
          <div className="flex h-20 w-[167px] items-center justify-center rounded-[10px] bg-[#1a73e8] text-white">Print</div>
          <div className="flex h-20 w-[185px] items-center justify-center rounded-[10px] border-2 border-[#dadce0] text-[#1a73e8]">Cancel</div>
          <div className="absolute top-[11px] right-[6px] h-[137px] w-[460px] border-15 border-[#ed1c24]" />
        </div>
      </div>
    </div>
  );
}

/* ---------- player and task bar ---------- */

function Player() {
  return (
    <div className="flex h-[90px] items-center text-[#212121]">
      <div className="flex gap-[50px]">
        <MdPlayArrow className="size-[90px]" />
        <MdPause className="size-[90px] text-[#bdbdbd]" />
        <MdStop className="size-[90px]" />
        <MdFirstPage className="size-[90px]" />
        <MdLastPage className="size-[90px]" />
      </div>
      <div className="relative z-10 ml-[21px] size-[50px] rounded-full bg-black" />
      <div className="-ml-2 mt-[6px] h-5 w-[900px] rounded-r-[2px] bg-[#9e9e9e]" />
    </div>
  );
}

function TaskBar() {
  return (
    <div className="flex h-[100px] items-center bg-[#26282c]">
      <div className="flex h-full w-[120px] items-center justify-center bg-[#292b2f]">
        <svg className="h-[41px] w-[41px]" viewBox="0 0 41 41" fill="#fff">
          <path d="M0 6L16.500 3.500V18.500H0ZM18.500 3.200L41 0V18.500H18.500ZM0 20.500H16.500V37L0 34.500ZM18.500 20.500H41V41L18.500 37.500Z" />
        </svg>
      </div>
      <div className="flex h-full w-[860px] items-center border-3 border-[#c0c0c0] bg-[#f1f1f1] pl-[29px]">
        <svg className="h-12 w-12" viewBox="0 0 48 48" fill="none" stroke="#000" strokeWidth="3">
          <circle cx="31.500" cy="16.500" r="15" />
          <path d="M21 27L1.500 47" />
        </svg>
        <span className="mt-[3px] ml-[33px] font-['Open_Sans',sans-serif] text-[36.500px] tracking-[-0.550px] whitespace-nowrap text-[#2b2b2b]">Type here to search</span>
      </div>
      <div className="flex h-full w-[231px] items-center bg-[#292b2f] pl-[39px]">
        <svg className="size-[42px]" viewBox="0 0 42 42" fill="none">
          <circle cx="21" cy="21" r="17.500" stroke="#8f9092" strokeWidth="7" />
          <circle cx="21" cy="21" r="16.500" stroke="#fff" strokeWidth="5" />
        </svg>
        <svg className="ml-[79px] h-[39px] w-[42px]" viewBox="0 0 42 39" fill="none" stroke="#fff" strokeWidth="2">
          <path d="M1 0V7H26V0M1 39V32H26V39M1 11H26V28H1ZM37.500 0V9.500M37.500 21V39" />
          <circle cx="37.500" cy="15.500" r="3.200" fill="#fff" stroke="none" />
        </svg>
      </div>
    </div>
  );
}

export default function App() {
  return (
    <div className="h-[2229px] w-[4372px] overflow-hidden bg-white pt-[35px] pl-[266px] [zoom:0.93687]">
      <div className="relative flex h-[2160px] w-[3840px] flex-col bg-white">
        <TabStrip />
        <Toolbar />
        <div className="h-[3px] bg-[#dcdcdc]" />
        <div className="flex h-[1882px]">
          <div className="flex w-[2304px]">
            <SideBar />
            <div className="flex flex-1 flex-col justify-end pb-[25px] pl-[152px]">
              <Player />
            </div>
          </div>
          <div className="flex flex-1 flex-col gap-3">
            <div className="flex h-[108px] gap-3 font-['Open_Sans',sans-serif] text-[35px] text-black">
              <div className="flex-1 bg-[#bacfda]" />
              <div className="flex w-[500px] items-center justify-center bg-[#bacfda] pb-[2px]">Details</div>
            </div>
            <div className="flex-1 bg-[#bacfda]" />
          </div>
        </div>
        <TaskBar />
        <div className="absolute top-[167px] left-[620px] h-[1716px] w-[2601px] shadow-[0_5px_14px_rgba(0,0,0,0.4)]" />
        <PrintDialog />
      </div>
    </div>
  );
}
